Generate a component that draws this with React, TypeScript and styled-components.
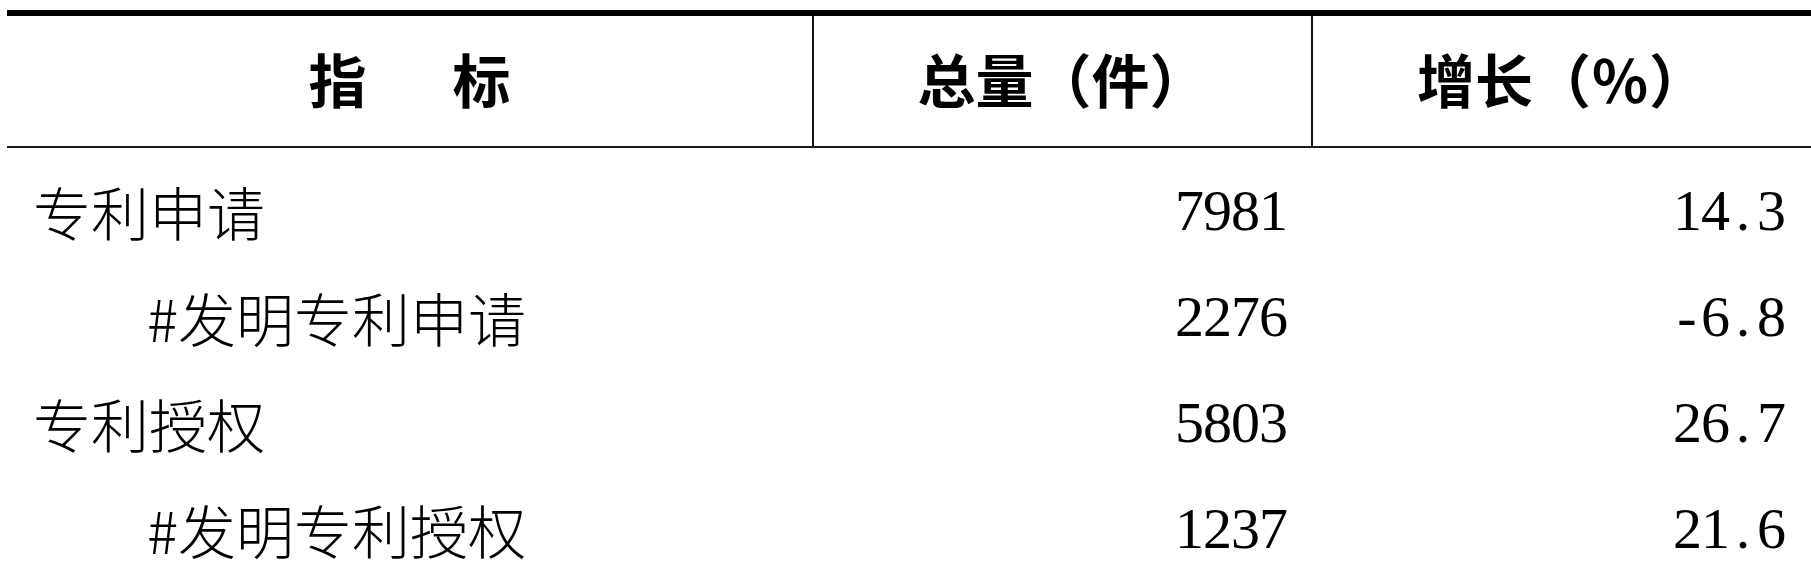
import styled, { createGlobalStyle } from "styled-components";

const GlobalStyle = createGlobalStyle`
    html, body {
        margin: 0;
        padding: 0;
        background: #fff;
    }
    body {
        width: 1811px;
        height: 565px;
        overflow: hidden;
        font-family: "Noto Sans CJK SC", "Liberation Serif", sans-serif;
        color: #000;
    }
`;

const Table = styled.div`
    margin: 10px 0 0 7px;
    width: 1804px;
    border-top: 6px solid #000;
`;

const Row = styled.div<{ $head?: boolean }>`
    display: grid;
    grid-template-columns: 807px 499px 1fr;
    height: ${(p) => (p.$head ? "130px" : "106px")};
    align-items: ${(p) => (p.$head ? "stretch" : "center")};
    border-bottom: ${(p) => (p.$head ? "2px solid #1a1a1a" : "none")};
`;

const Body = styled.div`
    padding-top: 10px;
`;

const HeadCell = styled.div<{ $divider?: boolean }>`
    display: flex;
    align-items: center;
    justify-content: center;
    border-right: ${(p) => (p.$divider ? "2px solid #111" : "none")};
    font-size: 58px;
    font-weight: 700;
    padding-bottom: 6px;
`;

const Spread = styled.span`
    letter-spacing: 86px;
    margin-right: -86px;
`;

const Label = styled.div<{ $indent?: boolean }>`
    padding-left: ${(p) => (p.$indent ? "140px" : "26px")};
    font-size: 58px;
    font-weight: 300;
    white-space: nowrap;
`;

const NumCell = styled.div`
    display: flex;
    justify-content: flex-end;
    padding-right: 26px;
`;

const Glyph = styled.span`
    display: inline-block;
    width: 28px;
    text-align: center;
    font-family: "Liberation Serif", serif;
    font-size: 58px;
    line-height: 1;
`;

const Num = ({ value }: { value: string }) => (
    <NumCell>
        {value.split("").map((c, i) => (
            <Glyph key={i}>{c}</Glyph>
        ))}
    </NumCell>
);

const rows = [
    { name: "专利申请", total: "7981", growth: "14.3" },
    { name: "#发明专利申请", total: "2276", growth: "-6.8", sub: true },
    { name: "专利授权", total: "5803", growth: "26.7" },
    { name: "#发明专利授权", total: "1237", growth: "21.6", sub: true },
];

const App = () => {
    return (
        <>
            <GlobalStyle />
            <Table>
                <Row $head>
                    <HeadCell $divider>
                        <Spread>指标</Spread>
                    </HeadCell>
                    <HeadCell $divider>总量（件）</HeadCell>
                    <HeadCell>增长（％）</HeadCell>
                </Row>
                <Body>
                    {rows.map((r) => (
                        <Row key={r.name}>
                            <Label $indent={r.sub}>{r.name}</Label>
                            <Num value={r.total} />
                            <Num value={r.growth} />
                        </Row>
                    ))}
                </Body>
            </Table>
        </>
    );
};

export default App;
